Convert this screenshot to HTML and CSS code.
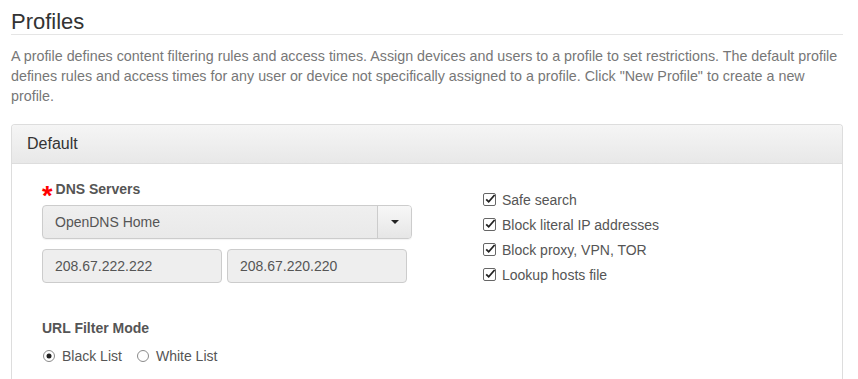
FILE: index.html
```html
<!DOCTYPE html>
<html>
<head>
<meta charset="utf-8">
<link rel="stylesheet" href="styles.css">
</head>
<body>
<div class="page">
  <h3 class="page-header">Profiles</h3>
  <p class="intro">A profile defines content filtering rules and access times. Assign devices and users to a profile to set restrictions. The default profile defines rules and access times for any user or device not specifically assigned to a profile. Click "New Profile" to create a new profile.</p>
  <div class="panel">
    <div class="panel-heading">Default</div>
    <div class="panel-body">
      <div class="col-left">
        <div class="field-label"><span class="req">*</span>DNS Servers</div>
        <div class="select">
          <span class="select-text">OpenDNS Home</span>
          <span class="select-btn"><span class="caret"></span></span>
        </div>
        <div class="ip-row">
          <div class="ip">208.67.222.222</div>
          <div class="ip">208.67.220.220</div>
        </div>
        <div class="field-label mode">URL Filter Mode</div>
        <div class="radios">
          <span class="radio"><svg width="12" height="12" viewBox="0 0 12 12"><circle cx="6" cy="6" r="5.5" fill="#fff" stroke="#8a8a8a"/><circle cx="6" cy="6" r="2.5" fill="#222"/></svg>Black List</span>
          <span class="radio"><svg width="12" height="12" viewBox="0 0 12 12"><circle cx="6" cy="6" r="5.5" fill="#fff" stroke="#8a8a8a"/></svg>White List</span>
        </div>
      </div>
      <div class="col-right">
        <div class="check"><svg class="cb" width="14" height="14" viewBox="0 0 14 14"><rect x="0.5" y="1.5" width="12" height="12" rx="1.5" fill="none" stroke="#666"/><path d="M3.2 7.3 L5.7 9.8 L11.6 3" fill="none" stroke="#222" stroke-width="1.8"/></svg>Safe search</div>
        <div class="check"><svg class="cb" width="14" height="14" viewBox="0 0 14 14"><rect x="0.5" y="1.5" width="12" height="12" rx="1.5" fill="none" stroke="#666"/><path d="M3.2 7.3 L5.7 9.8 L11.6 3" fill="none" stroke="#222" stroke-width="1.8"/></svg>Block literal IP addresses</div>
        <div class="check"><svg class="cb" width="14" height="14" viewBox="0 0 14 14"><rect x="0.5" y="1.5" width="12" height="12" rx="1.5" fill="none" stroke="#666"/><path d="M3.2 7.3 L5.7 9.8 L11.6 3" fill="none" stroke="#222" stroke-width="1.8"/></svg>Block proxy, VPN, TOR</div>
        <div class="check"><svg class="cb" width="14" height="14" viewBox="0 0 14 14"><rect x="0.5" y="1.5" width="12" height="12" rx="1.5" fill="none" stroke="#666"/><path d="M3.2 7.3 L5.7 9.8 L11.6 3" fill="none" stroke="#222" stroke-width="1.8"/></svg>Lookup hosts file</div>
      </div>
    </div>
  </div>
</div>
</body>
</html>
```

FILE: styles.css
```css
html, body {
  margin: 0;
  padding: 0;
  background: #fff;
}
body {
  font-family: "Liberation Sans", Arial, sans-serif;
  font-size: 14px;
  line-height: 20px;
  color: #333;
}
.page {
  padding: 10px 15px 0 11px;
}
.page-header {
  margin: 0;
  font-size: 22px;
  font-weight: normal;
  line-height: 24px;
  color: #333;
  border-bottom: 1px solid #e5e5e5;
}
.intro {
  margin: 11px 0 18px;
  font-size: 14.3px;
  color: #777;
}
.panel {
  border: 1px solid #ddd;
  border-bottom: none;
  border-radius: 4px 4px 0 0;
  height: 260px;
}
.panel-heading {
  padding: 9px 15px;
  font-size: 16px;
  line-height: 20px;
  color: #333;
  background: linear-gradient(#f5f5f5, #e8e8e8);
  border-bottom: 1px solid #ddd;
  border-radius: 3px 3px 0 0;
}
.panel-body {
  display: flex;
  padding: 15px 30px 0 30px;
}
.col-left {
  width: 370px;
}
.col-right {
  padding: 9px 0 0 71px;
}
.field-label {
  font-weight: bold;
  color: #555;
  margin-bottom: 6px;
}
.req {
  color: #f00;
  font-size: 27px;
  vertical-align: -11px;
  line-height: 0;
  margin-right: 3px;
}
.select {
  display: flex;
  height: 34px;
  box-sizing: border-box;
  border: 1px solid #ccc;
  border-radius: 4px;
  background: linear-gradient(#efefef, #e9e9e9);
  color: #555;
  box-shadow: 0 1px 1px rgba(0,0,0,0.05);
}
.select-text {
  flex: 1;
  padding: 6px 12px;
}
.select-btn {
  width: 33px;
  border-left: 1px solid #ccc;
  display: flex;
  align-items: center;
  justify-content: center;
  background: linear-gradient(#f7f7f7, #e6e6e6);
  border-radius: 0 3px 3px 0;
}
.caret {
  width: 0;
  height: 0;
  border-left: 4px solid transparent;
  border-right: 4px solid transparent;
  border-top: 4px solid #222;
}
.ip-row {
  display: flex;
  gap: 5px;
  margin-top: 10px;
}
.ip {
  width: 180px;
  height: 34px;
  box-sizing: border-box;
  padding: 6px 12px;
  border: 1px solid #ccc;
  border-radius: 4px;
  background: #eee;
  color: #555;
}
.mode {
  margin-top: 35px;
  margin-bottom: 8px;
}
.radios {
  display: flex;
  gap: 14px;
  color: #555;
}
.radio {
  display: flex;
  align-items: center;
  gap: 7px;
}
.radio svg {
  margin-left: 1px;
}
.check {
  display: flex;
  align-items: center;
  line-height: 25px;
  color: #555;
}
.cb {
  margin-right: 5px;
  margin-top: -3px;
}
```
